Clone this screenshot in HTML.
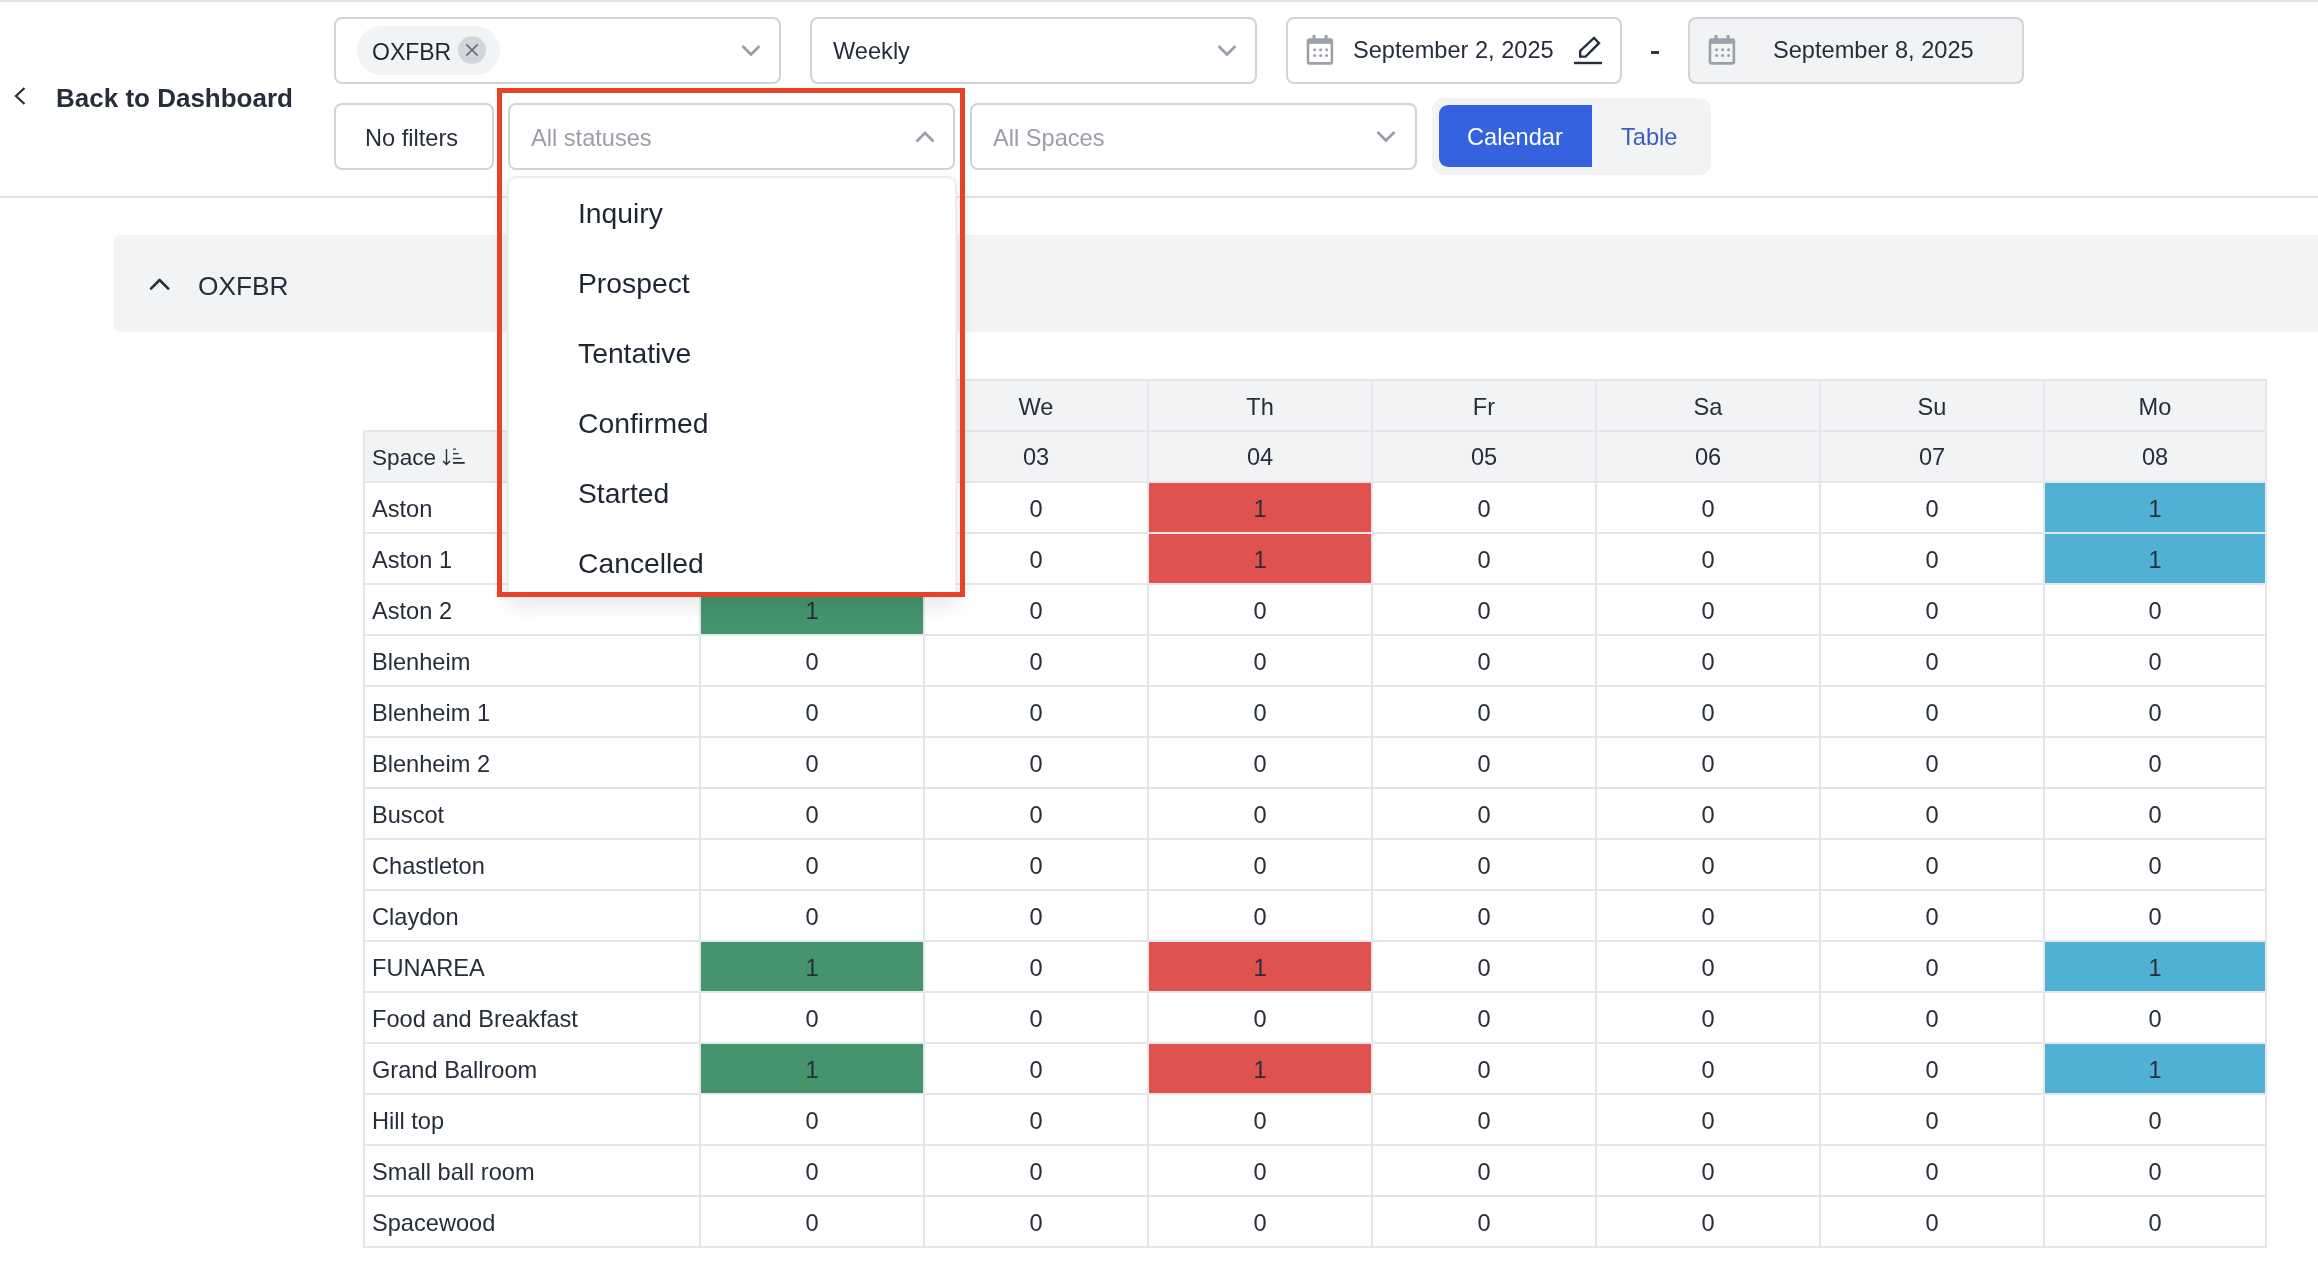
<!DOCTYPE html>
<html><head><meta charset="utf-8"><style>
html,body{margin:0;padding:0;background:#fff;width:2318px;height:1278px;overflow:hidden;position:relative}
#w{position:absolute;left:0;top:0;width:2318px;height:1278px;will-change:transform}
.t{position:absolute;white-space:nowrap;line-height:1;font-family:"Liberation Sans",sans-serif}
</style></head><body><div id="w">
<div style="position:absolute;left:0px;top:0px;width:2318px;height:2px;box-sizing:border-box;background:#e3e3e3"></div>
<div style="position:absolute;left:0px;top:196px;width:2318px;height:2px;box-sizing:border-box;background:#e3e3e3"></div>
<svg style="position:absolute;left:10px;top:82px" width="22" height="28" viewBox="0 0 22 28"><path d="M14.5 6 L6 14 L14.5 22" fill="none" stroke="#272e3b" stroke-width="2.2"/></svg>
<div class="t" style="left:56px;top:85.41px;font-size:26px;color:#272e3b;font-weight:700;">Back to Dashboard</div>
<div style="position:absolute;left:334px;top:17px;width:447px;height:67px;box-sizing:border-box;border:2px solid #d1d3d7;border-radius:8px;background:#fff"></div>
<div style="position:absolute;left:357px;top:26px;width:143px;height:49px;box-sizing:border-box;background:#f2f3f5;border-radius:25px"></div>
<div class="t" style="left:372px;top:40.90px;font-size:23px;color:#1f2530;font-weight:400;">OXFBR</div>
<svg style="position:absolute;left:458px;top:36px" width="28" height="28"><circle cx="14" cy="14" r="14" fill="#d3d6db"/><path d="M8.3 8.3 L19.7 19.7 M19.7 8.3 L8.3 19.7" stroke="#6b7280" stroke-width="1.8"/></svg>
<svg style="position:absolute;left:735.5px;top:40.5px" width="30" height="18.5"><path d="M6.5 5 L15 13.5 L23.5 5" fill="none" stroke="#9aa0aa" stroke-width="2.8"/></svg>
<div style="position:absolute;left:810px;top:17px;width:447px;height:67px;box-sizing:border-box;border:2px solid #d1d3d7;border-radius:8px;background:#fff"></div>
<div class="t" style="left:833px;top:40.40px;font-size:23.6px;color:#272e3b;font-weight:400;">Weekly</div>
<svg style="position:absolute;left:1211.6px;top:40.7px" width="30" height="18.5"><path d="M6.5 5 L15 13.5 L23.5 5" fill="none" stroke="#9aa0aa" stroke-width="2.8"/></svg>
<div style="position:absolute;left:1286px;top:17px;width:336px;height:67px;box-sizing:border-box;border:2px solid #d1d3d7;border-radius:8px;background:#fff"></div>
<svg style="position:absolute;left:1306px;top:35px" width="28" height="30" viewBox="0 0 28 30">
<rect x="6.5" y="0" width="3" height="5" fill="#9ca0a8"/><rect x="18.6" y="0" width="3" height="5" fill="#9ca0a8"/>
<rect x="0.7" y="3.2" width="26.5" height="26.5" rx="3" fill="#9ca0a8"/>
<rect x="3.3" y="8.8" width="21.3" height="18.2" fill="#ffffff"/>
<g fill="#9ca0a8"><circle cx="8.6" cy="14.8" r="1.5"/><circle cx="14.6" cy="14.8" r="1.5"/><circle cx="20.6" cy="14.8" r="1.5"/>
<circle cx="8.6" cy="20.6" r="1.5"/><circle cx="14.6" cy="20.6" r="1.5"/><circle cx="20.6" cy="20.6" r="1.5"/></g></svg>
<div class="t" style="left:1353px;top:39.40px;font-size:23.6px;color:#272e3b;font-weight:400;">September 2, 2025</div>
<svg style="position:absolute;left:1572px;top:34px" width="32" height="32" viewBox="0 0 32 32"><path d="M8.2 17 L8.2 22.6 L13.6 22.6 L27 9.2 L22 4 Z" fill="none" stroke="#272e3b" stroke-width="2.4" stroke-linejoin="miter"/><path d="M2 29 L30 29" stroke="#272e3b" stroke-width="2.4"/></svg>
<div style="position:absolute;left:1651px;top:51px;width:8px;height:3px;box-sizing:border-box;background:#2d3748"></div>
<div style="position:absolute;left:1688px;top:17px;width:336px;height:67px;box-sizing:border-box;border:2px solid #d1d3d7;border-radius:8px;background:#f2f3f5"></div>
<svg style="position:absolute;left:1708px;top:35px" width="28" height="30" viewBox="0 0 28 30">
<rect x="6.5" y="0" width="3" height="5" fill="#9ca0a8"/><rect x="18.6" y="0" width="3" height="5" fill="#9ca0a8"/>
<rect x="0.7" y="3.2" width="26.5" height="26.5" rx="3" fill="#9ca0a8"/>
<rect x="3.3" y="8.8" width="21.3" height="18.2" fill="#f2f3f5"/>
<g fill="#9ca0a8"><circle cx="8.6" cy="14.8" r="1.5"/><circle cx="14.6" cy="14.8" r="1.5"/><circle cx="20.6" cy="14.8" r="1.5"/>
<circle cx="8.6" cy="20.6" r="1.5"/><circle cx="14.6" cy="20.6" r="1.5"/><circle cx="20.6" cy="20.6" r="1.5"/></g></svg>
<div class="t" style="left:1773px;top:39.40px;font-size:23.6px;color:#272e3b;font-weight:400;">September 8, 2025</div>
<div style="position:absolute;left:334px;top:103px;width:160px;height:67px;box-sizing:border-box;border:2px solid #d1d3d7;border-radius:8px;background:#fff"></div>
<div class="t" style="left:365px;top:127.00px;font-size:23.6px;color:#272e3b;font-weight:400;">No filters</div>
<div style="position:absolute;left:508px;top:103px;width:447px;height:67px;box-sizing:border-box;border:2px solid #d1d3d7;border-radius:8px;background:#fff"></div>
<div class="t" style="left:531px;top:127.00px;font-size:23.6px;color:#9a9ea7;font-weight:400;">All statuses</div>
<svg style="position:absolute;left:909.5px;top:128.2px" width="30" height="18.5"><path d="M6.5 13.5 L15 5 L23.5 13.5" fill="none" stroke="#9aa0aa" stroke-width="2.8"/></svg>
<div style="position:absolute;left:970px;top:103px;width:447px;height:67px;box-sizing:border-box;border:2px solid #d1d3d7;border-radius:8px;background:#fff"></div>
<div class="t" style="left:993px;top:127.00px;font-size:23.6px;color:#9a9ea7;font-weight:400;">All Spaces</div>
<svg style="position:absolute;left:1371px;top:126.80000000000001px" width="30" height="18.5"><path d="M6.5 5 L15 13.5 L23.5 5" fill="none" stroke="#9aa0aa" stroke-width="2.8"/></svg>
<div style="position:absolute;left:1432px;top:98px;width:279px;height:77px;box-sizing:border-box;background:#f2f3f5;border-radius:12px"></div>
<div style="position:absolute;left:1439px;top:105px;width:153px;height:62px;box-sizing:border-box;background:#3563e0;border-radius:9px 0 0 9px"></div>
<div class="t" style="left:1467px;top:126.40px;font-size:23.6px;color:#ffffff;font-weight:400;">Calendar</div>
<div class="t" style="left:1621px;top:126.40px;font-size:23.6px;color:#3d5cbf;font-weight:400;">Table</div>
<div style="position:absolute;left:114px;top:235px;width:2204px;height:97px;box-sizing:border-box;background:#f2f3f5;border-radius:6px 0 0 6px"></div>
<svg style="position:absolute;left:140px;top:270px" width="40" height="30"><path d="M11 18.6 L19.6 10 L28.2 18.6" fill="none" stroke="#272e3b" stroke-width="2.6" stroke-linecap="round" stroke-linejoin="round"/></svg>
<div class="t" style="left:198px;top:273.16px;font-size:26.3px;color:#272e3b;font-weight:400;">OXFBR</div>
<div style="position:absolute;left:700px;top:380px;width:1566px;height:51px;box-sizing:border-box;background:#f2f3f5"></div>
<div style="position:absolute;left:363px;top:431px;width:1903px;height:51px;box-sizing:border-box;background:#f2f3f5"></div>
<div style="position:absolute;left:701px;top:483px;width:223px;height:50px;box-sizing:border-box;background:#45946c"></div>
<div style="position:absolute;left:1149px;top:483px;width:223px;height:50px;box-sizing:border-box;background:#df524e"></div>
<div style="position:absolute;left:2045px;top:483px;width:221px;height:50px;box-sizing:border-box;background:#50b1d4"></div>
<div style="position:absolute;left:701px;top:534px;width:223px;height:50px;box-sizing:border-box;background:#45946c"></div>
<div style="position:absolute;left:1149px;top:534px;width:223px;height:50px;box-sizing:border-box;background:#df524e"></div>
<div style="position:absolute;left:2045px;top:534px;width:221px;height:50px;box-sizing:border-box;background:#50b1d4"></div>
<div style="position:absolute;left:701px;top:585px;width:223px;height:50px;box-sizing:border-box;background:#45946c"></div>
<div style="position:absolute;left:701px;top:942px;width:223px;height:50px;box-sizing:border-box;background:#45946c"></div>
<div style="position:absolute;left:1149px;top:942px;width:223px;height:50px;box-sizing:border-box;background:#df524e"></div>
<div style="position:absolute;left:2045px;top:942px;width:221px;height:50px;box-sizing:border-box;background:#50b1d4"></div>
<div style="position:absolute;left:701px;top:1044px;width:223px;height:50px;box-sizing:border-box;background:#45946c"></div>
<div style="position:absolute;left:1149px;top:1044px;width:223px;height:50px;box-sizing:border-box;background:#df524e"></div>
<div style="position:absolute;left:2045px;top:1044px;width:221px;height:50px;box-sizing:border-box;background:#50b1d4"></div>
<div style="position:absolute;left:700px;top:379px;width:1567px;height:2px;box-sizing:border-box;background:#e4e6ea"></div>
<div style="position:absolute;left:363px;top:430px;width:1904px;height:2px;box-sizing:border-box;background:#e4e6ea"></div>
<div style="position:absolute;left:363px;top:481px;width:1904px;height:2px;box-sizing:border-box;background:#e4e6ea"></div>
<div style="position:absolute;left:363px;top:532px;width:1904px;height:2px;box-sizing:border-box;background:#e4e6ea"></div>
<div style="position:absolute;left:363px;top:583px;width:1904px;height:2px;box-sizing:border-box;background:#e4e6ea"></div>
<div style="position:absolute;left:363px;top:634px;width:1904px;height:2px;box-sizing:border-box;background:#e4e6ea"></div>
<div style="position:absolute;left:363px;top:685px;width:1904px;height:2px;box-sizing:border-box;background:#e4e6ea"></div>
<div style="position:absolute;left:363px;top:736px;width:1904px;height:2px;box-sizing:border-box;background:#e4e6ea"></div>
<div style="position:absolute;left:363px;top:787px;width:1904px;height:2px;box-sizing:border-box;background:#e4e6ea"></div>
<div style="position:absolute;left:363px;top:838px;width:1904px;height:2px;box-sizing:border-box;background:#e4e6ea"></div>
<div style="position:absolute;left:363px;top:889px;width:1904px;height:2px;box-sizing:border-box;background:#e4e6ea"></div>
<div style="position:absolute;left:363px;top:940px;width:1904px;height:2px;box-sizing:border-box;background:#e4e6ea"></div>
<div style="position:absolute;left:363px;top:991px;width:1904px;height:2px;box-sizing:border-box;background:#e4e6ea"></div>
<div style="position:absolute;left:363px;top:1042px;width:1904px;height:2px;box-sizing:border-box;background:#e4e6ea"></div>
<div style="position:absolute;left:363px;top:1093px;width:1904px;height:2px;box-sizing:border-box;background:#e4e6ea"></div>
<div style="position:absolute;left:363px;top:1144px;width:1904px;height:2px;box-sizing:border-box;background:#e4e6ea"></div>
<div style="position:absolute;left:363px;top:1195px;width:1904px;height:2px;box-sizing:border-box;background:#e4e6ea"></div>
<div style="position:absolute;left:363px;top:1246px;width:1904px;height:2px;box-sizing:border-box;background:#e4e6ea"></div>
<div style="position:absolute;left:363px;top:431px;width:2px;height:816px;box-sizing:border-box;background:#e4e6ea"></div>
<div style="position:absolute;left:699px;top:380px;width:2px;height:867px;box-sizing:border-box;background:#e4e6ea"></div>
<div style="position:absolute;left:923px;top:380px;width:2px;height:867px;box-sizing:border-box;background:#e4e6ea"></div>
<div style="position:absolute;left:1147px;top:380px;width:2px;height:867px;box-sizing:border-box;background:#e4e6ea"></div>
<div style="position:absolute;left:1371px;top:380px;width:2px;height:867px;box-sizing:border-box;background:#e4e6ea"></div>
<div style="position:absolute;left:1595px;top:380px;width:2px;height:867px;box-sizing:border-box;background:#e4e6ea"></div>
<div style="position:absolute;left:1819px;top:380px;width:2px;height:867px;box-sizing:border-box;background:#e4e6ea"></div>
<div style="position:absolute;left:2043px;top:380px;width:2px;height:867px;box-sizing:border-box;background:#e4e6ea"></div>
<div style="position:absolute;left:2265px;top:380px;width:2px;height:867px;box-sizing:border-box;background:#e4e6ea"></div>
<div class="t" style="left:700.0px;width:224px;text-align:center;top:395.90px;font-size:23.6px;color:#272e3b">Tu</div>
<div class="t" style="left:700.0px;width:224px;text-align:center;top:445.90px;font-size:23.6px;color:#272e3b">02</div>
<div class="t" style="left:924.0px;width:224px;text-align:center;top:395.90px;font-size:23.6px;color:#272e3b">We</div>
<div class="t" style="left:924.0px;width:224px;text-align:center;top:445.90px;font-size:23.6px;color:#272e3b">03</div>
<div class="t" style="left:1148.0px;width:224px;text-align:center;top:395.90px;font-size:23.6px;color:#272e3b">Th</div>
<div class="t" style="left:1148.0px;width:224px;text-align:center;top:445.90px;font-size:23.6px;color:#272e3b">04</div>
<div class="t" style="left:1372.0px;width:224px;text-align:center;top:395.90px;font-size:23.6px;color:#272e3b">Fr</div>
<div class="t" style="left:1372.0px;width:224px;text-align:center;top:445.90px;font-size:23.6px;color:#272e3b">05</div>
<div class="t" style="left:1596.0px;width:224px;text-align:center;top:395.90px;font-size:23.6px;color:#272e3b">Sa</div>
<div class="t" style="left:1596.0px;width:224px;text-align:center;top:445.90px;font-size:23.6px;color:#272e3b">06</div>
<div class="t" style="left:1820.0px;width:224px;text-align:center;top:395.90px;font-size:23.6px;color:#272e3b">Su</div>
<div class="t" style="left:1820.0px;width:224px;text-align:center;top:445.90px;font-size:23.6px;color:#272e3b">07</div>
<div class="t" style="left:2043.0px;width:224px;text-align:center;top:395.90px;font-size:23.6px;color:#272e3b">Mo</div>
<div class="t" style="left:2043.0px;width:224px;text-align:center;top:445.90px;font-size:23.6px;color:#272e3b">08</div>
<div class="t" style="left:372px;top:446.73px;font-size:22.6px;color:#272e3b;font-weight:400;">Space</div>
<svg style="position:absolute;left:440px;top:446px" width="28" height="22" viewBox="0 0 28 22"><path d="M6.5 3 L6.5 18.5 M3 15 L6.5 18.5 L10 15" fill="none" stroke="#272e3b" stroke-width="1.4"/><g fill="#272e3b"><rect x="13" y="2.5" width="3" height="1.2"/><rect x="13" y="7" width="5.7" height="1.3"/><rect x="13" y="11.8" width="8.7" height="1.3"/><rect x="13" y="16" width="11.7" height="1.8"/></g></svg>
<div class="t" style="left:372px;top:497.60px;font-size:23.6px;color:#272e3b;font-weight:400;">Aston</div>
<div class="t" style="left:700.0px;width:224px;text-align:center;top:497.60px;font-size:23.6px;color:#272e3b">1</div>
<div class="t" style="left:924.0px;width:224px;text-align:center;top:497.60px;font-size:23.6px;color:#272e3b">0</div>
<div class="t" style="left:1148.0px;width:224px;text-align:center;top:497.60px;font-size:23.6px;color:#272e3b">1</div>
<div class="t" style="left:1372.0px;width:224px;text-align:center;top:497.60px;font-size:23.6px;color:#272e3b">0</div>
<div class="t" style="left:1596.0px;width:224px;text-align:center;top:497.60px;font-size:23.6px;color:#272e3b">0</div>
<div class="t" style="left:1820.0px;width:224px;text-align:center;top:497.60px;font-size:23.6px;color:#272e3b">0</div>
<div class="t" style="left:2043.0px;width:224px;text-align:center;top:497.60px;font-size:23.6px;color:#272e3b">1</div>
<div class="t" style="left:372px;top:548.60px;font-size:23.6px;color:#272e3b;font-weight:400;">Aston 1</div>
<div class="t" style="left:700.0px;width:224px;text-align:center;top:548.60px;font-size:23.6px;color:#272e3b">1</div>
<div class="t" style="left:924.0px;width:224px;text-align:center;top:548.60px;font-size:23.6px;color:#272e3b">0</div>
<div class="t" style="left:1148.0px;width:224px;text-align:center;top:548.60px;font-size:23.6px;color:#272e3b">1</div>
<div class="t" style="left:1372.0px;width:224px;text-align:center;top:548.60px;font-size:23.6px;color:#272e3b">0</div>
<div class="t" style="left:1596.0px;width:224px;text-align:center;top:548.60px;font-size:23.6px;color:#272e3b">0</div>
<div class="t" style="left:1820.0px;width:224px;text-align:center;top:548.60px;font-size:23.6px;color:#272e3b">0</div>
<div class="t" style="left:2043.0px;width:224px;text-align:center;top:548.60px;font-size:23.6px;color:#272e3b">1</div>
<div class="t" style="left:372px;top:599.60px;font-size:23.6px;color:#272e3b;font-weight:400;">Aston 2</div>
<div class="t" style="left:700.0px;width:224px;text-align:center;top:599.60px;font-size:23.6px;color:#272e3b">1</div>
<div class="t" style="left:924.0px;width:224px;text-align:center;top:599.60px;font-size:23.6px;color:#272e3b">0</div>
<div class="t" style="left:1148.0px;width:224px;text-align:center;top:599.60px;font-size:23.6px;color:#272e3b">0</div>
<div class="t" style="left:1372.0px;width:224px;text-align:center;top:599.60px;font-size:23.6px;color:#272e3b">0</div>
<div class="t" style="left:1596.0px;width:224px;text-align:center;top:599.60px;font-size:23.6px;color:#272e3b">0</div>
<div class="t" style="left:1820.0px;width:224px;text-align:center;top:599.60px;font-size:23.6px;color:#272e3b">0</div>
<div class="t" style="left:2043.0px;width:224px;text-align:center;top:599.60px;font-size:23.6px;color:#272e3b">0</div>
<div class="t" style="left:372px;top:650.60px;font-size:23.6px;color:#272e3b;font-weight:400;">Blenheim</div>
<div class="t" style="left:700.0px;width:224px;text-align:center;top:650.60px;font-size:23.6px;color:#272e3b">0</div>
<div class="t" style="left:924.0px;width:224px;text-align:center;top:650.60px;font-size:23.6px;color:#272e3b">0</div>
<div class="t" style="left:1148.0px;width:224px;text-align:center;top:650.60px;font-size:23.6px;color:#272e3b">0</div>
<div class="t" style="left:1372.0px;width:224px;text-align:center;top:650.60px;font-size:23.6px;color:#272e3b">0</div>
<div class="t" style="left:1596.0px;width:224px;text-align:center;top:650.60px;font-size:23.6px;color:#272e3b">0</div>
<div class="t" style="left:1820.0px;width:224px;text-align:center;top:650.60px;font-size:23.6px;color:#272e3b">0</div>
<div class="t" style="left:2043.0px;width:224px;text-align:center;top:650.60px;font-size:23.6px;color:#272e3b">0</div>
<div class="t" style="left:372px;top:701.60px;font-size:23.6px;color:#272e3b;font-weight:400;">Blenheim 1</div>
<div class="t" style="left:700.0px;width:224px;text-align:center;top:701.60px;font-size:23.6px;color:#272e3b">0</div>
<div class="t" style="left:924.0px;width:224px;text-align:center;top:701.60px;font-size:23.6px;color:#272e3b">0</div>
<div class="t" style="left:1148.0px;width:224px;text-align:center;top:701.60px;font-size:23.6px;color:#272e3b">0</div>
<div class="t" style="left:1372.0px;width:224px;text-align:center;top:701.60px;font-size:23.6px;color:#272e3b">0</div>
<div class="t" style="left:1596.0px;width:224px;text-align:center;top:701.60px;font-size:23.6px;color:#272e3b">0</div>
<div class="t" style="left:1820.0px;width:224px;text-align:center;top:701.60px;font-size:23.6px;color:#272e3b">0</div>
<div class="t" style="left:2043.0px;width:224px;text-align:center;top:701.60px;font-size:23.6px;color:#272e3b">0</div>
<div class="t" style="left:372px;top:752.60px;font-size:23.6px;color:#272e3b;font-weight:400;">Blenheim 2</div>
<div class="t" style="left:700.0px;width:224px;text-align:center;top:752.60px;font-size:23.6px;color:#272e3b">0</div>
<div class="t" style="left:924.0px;width:224px;text-align:center;top:752.60px;font-size:23.6px;color:#272e3b">0</div>
<div class="t" style="left:1148.0px;width:224px;text-align:center;top:752.60px;font-size:23.6px;color:#272e3b">0</div>
<div class="t" style="left:1372.0px;width:224px;text-align:center;top:752.60px;font-size:23.6px;color:#272e3b">0</div>
<div class="t" style="left:1596.0px;width:224px;text-align:center;top:752.60px;font-size:23.6px;color:#272e3b">0</div>
<div class="t" style="left:1820.0px;width:224px;text-align:center;top:752.60px;font-size:23.6px;color:#272e3b">0</div>
<div class="t" style="left:2043.0px;width:224px;text-align:center;top:752.60px;font-size:23.6px;color:#272e3b">0</div>
<div class="t" style="left:372px;top:803.60px;font-size:23.6px;color:#272e3b;font-weight:400;">Buscot</div>
<div class="t" style="left:700.0px;width:224px;text-align:center;top:803.60px;font-size:23.6px;color:#272e3b">0</div>
<div class="t" style="left:924.0px;width:224px;text-align:center;top:803.60px;font-size:23.6px;color:#272e3b">0</div>
<div class="t" style="left:1148.0px;width:224px;text-align:center;top:803.60px;font-size:23.6px;color:#272e3b">0</div>
<div class="t" style="left:1372.0px;width:224px;text-align:center;top:803.60px;font-size:23.6px;color:#272e3b">0</div>
<div class="t" style="left:1596.0px;width:224px;text-align:center;top:803.60px;font-size:23.6px;color:#272e3b">0</div>
<div class="t" style="left:1820.0px;width:224px;text-align:center;top:803.60px;font-size:23.6px;color:#272e3b">0</div>
<div class="t" style="left:2043.0px;width:224px;text-align:center;top:803.60px;font-size:23.6px;color:#272e3b">0</div>
<div class="t" style="left:372px;top:854.60px;font-size:23.6px;color:#272e3b;font-weight:400;">Chastleton</div>
<div class="t" style="left:700.0px;width:224px;text-align:center;top:854.60px;font-size:23.6px;color:#272e3b">0</div>
<div class="t" style="left:924.0px;width:224px;text-align:center;top:854.60px;font-size:23.6px;color:#272e3b">0</div>
<div class="t" style="left:1148.0px;width:224px;text-align:center;top:854.60px;font-size:23.6px;color:#272e3b">0</div>
<div class="t" style="left:1372.0px;width:224px;text-align:center;top:854.60px;font-size:23.6px;color:#272e3b">0</div>
<div class="t" style="left:1596.0px;width:224px;text-align:center;top:854.60px;font-size:23.6px;color:#272e3b">0</div>
<div class="t" style="left:1820.0px;width:224px;text-align:center;top:854.60px;font-size:23.6px;color:#272e3b">0</div>
<div class="t" style="left:2043.0px;width:224px;text-align:center;top:854.60px;font-size:23.6px;color:#272e3b">0</div>
<div class="t" style="left:372px;top:905.60px;font-size:23.6px;color:#272e3b;font-weight:400;">Claydon</div>
<div class="t" style="left:700.0px;width:224px;text-align:center;top:905.60px;font-size:23.6px;color:#272e3b">0</div>
<div class="t" style="left:924.0px;width:224px;text-align:center;top:905.60px;font-size:23.6px;color:#272e3b">0</div>
<div class="t" style="left:1148.0px;width:224px;text-align:center;top:905.60px;font-size:23.6px;color:#272e3b">0</div>
<div class="t" style="left:1372.0px;width:224px;text-align:center;top:905.60px;font-size:23.6px;color:#272e3b">0</div>
<div class="t" style="left:1596.0px;width:224px;text-align:center;top:905.60px;font-size:23.6px;color:#272e3b">0</div>
<div class="t" style="left:1820.0px;width:224px;text-align:center;top:905.60px;font-size:23.6px;color:#272e3b">0</div>
<div class="t" style="left:2043.0px;width:224px;text-align:center;top:905.60px;font-size:23.6px;color:#272e3b">0</div>
<div class="t" style="left:372px;top:956.60px;font-size:23.6px;color:#272e3b;font-weight:400;">FUNAREA</div>
<div class="t" style="left:700.0px;width:224px;text-align:center;top:956.60px;font-size:23.6px;color:#272e3b">1</div>
<div class="t" style="left:924.0px;width:224px;text-align:center;top:956.60px;font-size:23.6px;color:#272e3b">0</div>
<div class="t" style="left:1148.0px;width:224px;text-align:center;top:956.60px;font-size:23.6px;color:#272e3b">1</div>
<div class="t" style="left:1372.0px;width:224px;text-align:center;top:956.60px;font-size:23.6px;color:#272e3b">0</div>
<div class="t" style="left:1596.0px;width:224px;text-align:center;top:956.60px;font-size:23.6px;color:#272e3b">0</div>
<div class="t" style="left:1820.0px;width:224px;text-align:center;top:956.60px;font-size:23.6px;color:#272e3b">0</div>
<div class="t" style="left:2043.0px;width:224px;text-align:center;top:956.60px;font-size:23.6px;color:#272e3b">1</div>
<div class="t" style="left:372px;top:1007.60px;font-size:23.6px;color:#272e3b;font-weight:400;">Food and Breakfast</div>
<div class="t" style="left:700.0px;width:224px;text-align:center;top:1007.60px;font-size:23.6px;color:#272e3b">0</div>
<div class="t" style="left:924.0px;width:224px;text-align:center;top:1007.60px;font-size:23.6px;color:#272e3b">0</div>
<div class="t" style="left:1148.0px;width:224px;text-align:center;top:1007.60px;font-size:23.6px;color:#272e3b">0</div>
<div class="t" style="left:1372.0px;width:224px;text-align:center;top:1007.60px;font-size:23.6px;color:#272e3b">0</div>
<div class="t" style="left:1596.0px;width:224px;text-align:center;top:1007.60px;font-size:23.6px;color:#272e3b">0</div>
<div class="t" style="left:1820.0px;width:224px;text-align:center;top:1007.60px;font-size:23.6px;color:#272e3b">0</div>
<div class="t" style="left:2043.0px;width:224px;text-align:center;top:1007.60px;font-size:23.6px;color:#272e3b">0</div>
<div class="t" style="left:372px;top:1058.60px;font-size:23.6px;color:#272e3b;font-weight:400;">Grand Ballroom</div>
<div class="t" style="left:700.0px;width:224px;text-align:center;top:1058.60px;font-size:23.6px;color:#272e3b">1</div>
<div class="t" style="left:924.0px;width:224px;text-align:center;top:1058.60px;font-size:23.6px;color:#272e3b">0</div>
<div class="t" style="left:1148.0px;width:224px;text-align:center;top:1058.60px;font-size:23.6px;color:#272e3b">1</div>
<div class="t" style="left:1372.0px;width:224px;text-align:center;top:1058.60px;font-size:23.6px;color:#272e3b">0</div>
<div class="t" style="left:1596.0px;width:224px;text-align:center;top:1058.60px;font-size:23.6px;color:#272e3b">0</div>
<div class="t" style="left:1820.0px;width:224px;text-align:center;top:1058.60px;font-size:23.6px;color:#272e3b">0</div>
<div class="t" style="left:2043.0px;width:224px;text-align:center;top:1058.60px;font-size:23.6px;color:#272e3b">1</div>
<div class="t" style="left:372px;top:1109.60px;font-size:23.6px;color:#272e3b;font-weight:400;">Hill top</div>
<div class="t" style="left:700.0px;width:224px;text-align:center;top:1109.60px;font-size:23.6px;color:#272e3b">0</div>
<div class="t" style="left:924.0px;width:224px;text-align:center;top:1109.60px;font-size:23.6px;color:#272e3b">0</div>
<div class="t" style="left:1148.0px;width:224px;text-align:center;top:1109.60px;font-size:23.6px;color:#272e3b">0</div>
<div class="t" style="left:1372.0px;width:224px;text-align:center;top:1109.60px;font-size:23.6px;color:#272e3b">0</div>
<div class="t" style="left:1596.0px;width:224px;text-align:center;top:1109.60px;font-size:23.6px;color:#272e3b">0</div>
<div class="t" style="left:1820.0px;width:224px;text-align:center;top:1109.60px;font-size:23.6px;color:#272e3b">0</div>
<div class="t" style="left:2043.0px;width:224px;text-align:center;top:1109.60px;font-size:23.6px;color:#272e3b">0</div>
<div class="t" style="left:372px;top:1160.60px;font-size:23.6px;color:#272e3b;font-weight:400;">Small ball room</div>
<div class="t" style="left:700.0px;width:224px;text-align:center;top:1160.60px;font-size:23.6px;color:#272e3b">0</div>
<div class="t" style="left:924.0px;width:224px;text-align:center;top:1160.60px;font-size:23.6px;color:#272e3b">0</div>
<div class="t" style="left:1148.0px;width:224px;text-align:center;top:1160.60px;font-size:23.6px;color:#272e3b">0</div>
<div class="t" style="left:1372.0px;width:224px;text-align:center;top:1160.60px;font-size:23.6px;color:#272e3b">0</div>
<div class="t" style="left:1596.0px;width:224px;text-align:center;top:1160.60px;font-size:23.6px;color:#272e3b">0</div>
<div class="t" style="left:1820.0px;width:224px;text-align:center;top:1160.60px;font-size:23.6px;color:#272e3b">0</div>
<div class="t" style="left:2043.0px;width:224px;text-align:center;top:1160.60px;font-size:23.6px;color:#272e3b">0</div>
<div class="t" style="left:372px;top:1211.60px;font-size:23.6px;color:#272e3b;font-weight:400;">Spacewood</div>
<div class="t" style="left:700.0px;width:224px;text-align:center;top:1211.60px;font-size:23.6px;color:#272e3b">0</div>
<div class="t" style="left:924.0px;width:224px;text-align:center;top:1211.60px;font-size:23.6px;color:#272e3b">0</div>
<div class="t" style="left:1148.0px;width:224px;text-align:center;top:1211.60px;font-size:23.6px;color:#272e3b">0</div>
<div class="t" style="left:1372.0px;width:224px;text-align:center;top:1211.60px;font-size:23.6px;color:#272e3b">0</div>
<div class="t" style="left:1596.0px;width:224px;text-align:center;top:1211.60px;font-size:23.6px;color:#272e3b">0</div>
<div class="t" style="left:1820.0px;width:224px;text-align:center;top:1211.60px;font-size:23.6px;color:#272e3b">0</div>
<div class="t" style="left:2043.0px;width:224px;text-align:center;top:1211.60px;font-size:23.6px;color:#272e3b">0</div>
<div style="position:absolute;left:507px;top:176px;width:450px;height:419px;box-sizing:border-box;background:#fff;border:2px solid #eceef1;border-bottom:none;border-radius:9px 9px 0 0;box-shadow:0 10px 22px rgba(0,0,0,0.10)"></div>
<div class="t" style="left:578px;top:199.10px;font-size:28.3px;color:#1f2633;font-weight:400;">Inquiry</div>
<div class="t" style="left:578px;top:269.10px;font-size:28.3px;color:#1f2633;font-weight:400;">Prospect</div>
<div class="t" style="left:578px;top:339.10px;font-size:28.3px;color:#1f2633;font-weight:400;">Tentative</div>
<div class="t" style="left:578px;top:409.10px;font-size:28.3px;color:#1f2633;font-weight:400;">Confirmed</div>
<div class="t" style="left:578px;top:479.10px;font-size:28.3px;color:#1f2633;font-weight:400;">Started</div>
<div class="t" style="left:578px;top:549.10px;font-size:28.3px;color:#1f2633;font-weight:400;">Cancelled</div>
<div style="position:absolute;left:497.2px;top:87.5px;width:468px;height:509.8px;box-sizing:border-box;border:5.4px solid #e8412a"></div>
</div></body></html>
